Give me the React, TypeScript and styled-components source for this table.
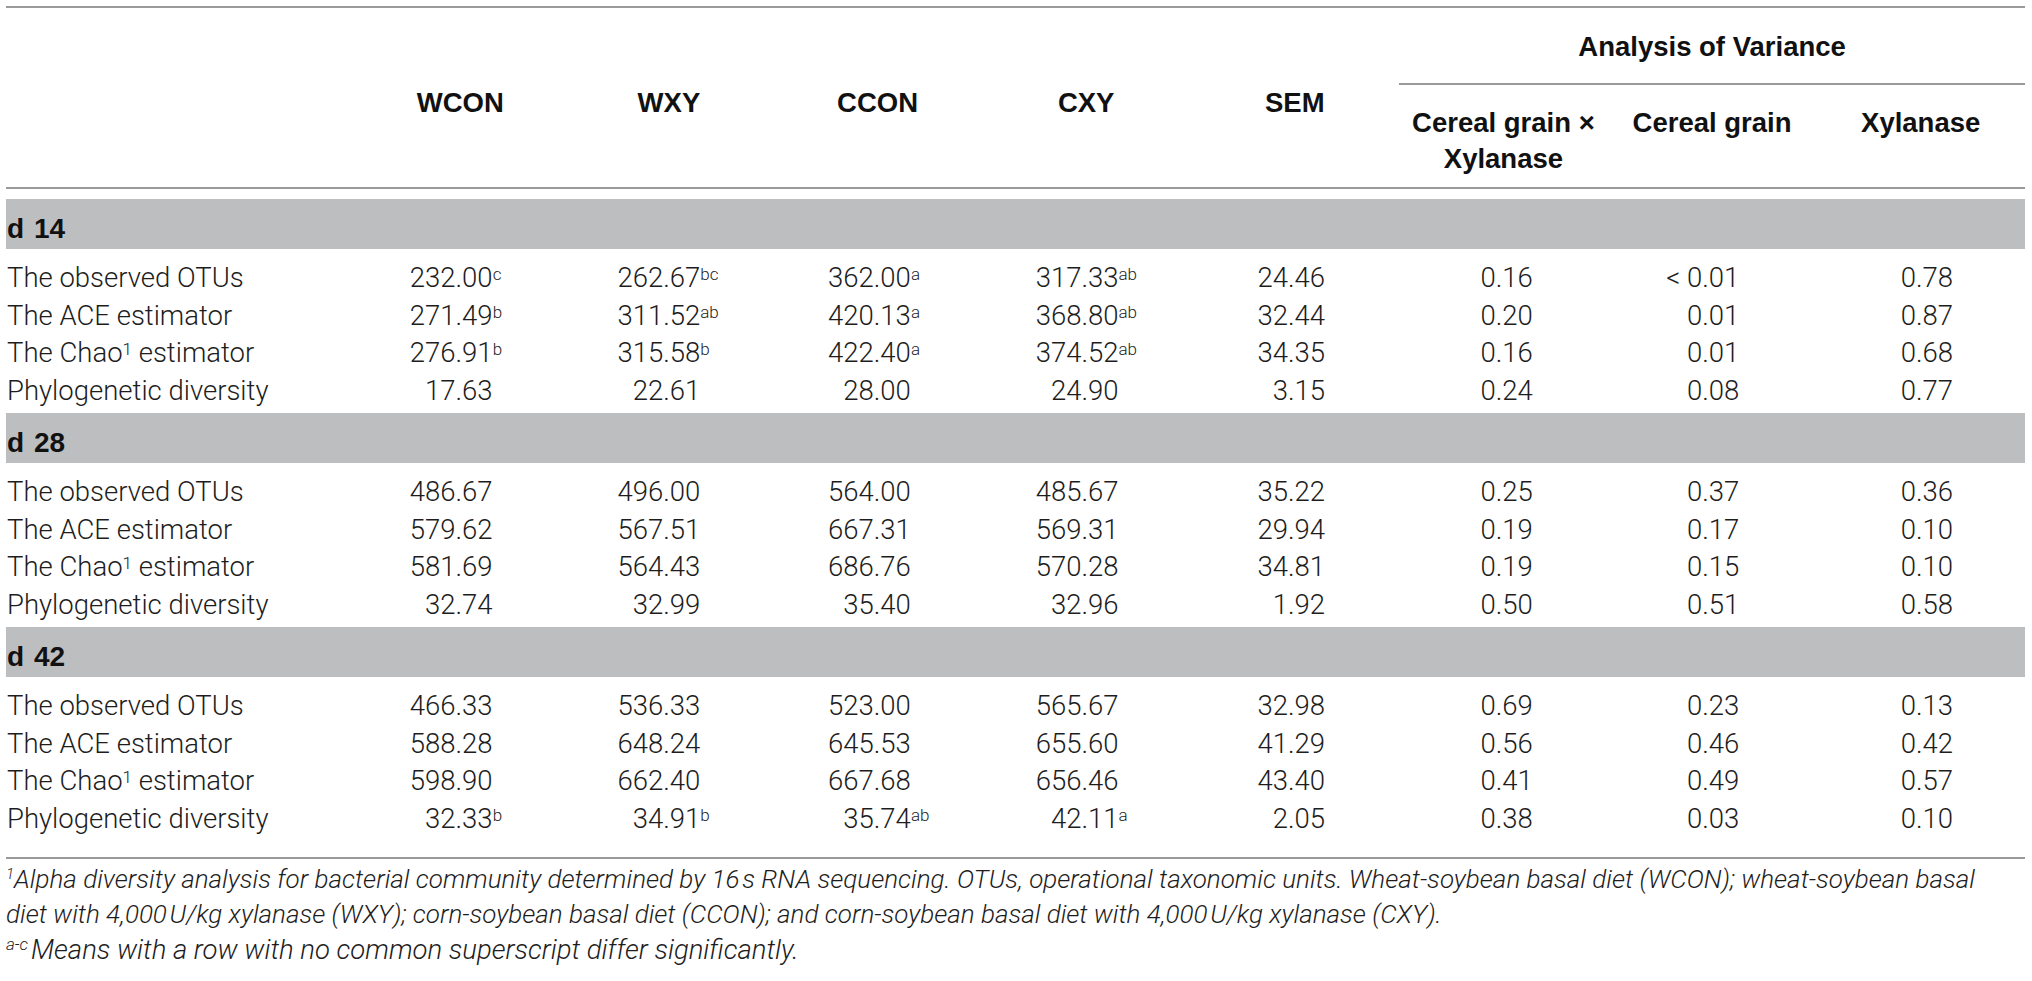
import React from "react";
import styled, { createGlobalStyle } from "styled-components";

const GlobalStyle = createGlobalStyle`
  html, body {
    margin: 0;
    padding: 0;
    background: #ffffff;
    overflow: hidden;
  }
  body {
    font-family: Roboto, "Liberation Sans", Arial, sans-serif;
    color: #1d1d1d;
  }
`;

const COLS = "350px repeat(8, 1fr)";
const RULE = "#999a9c";

const Page = styled.div`
  padding: 6px 0 0 6px;
  width: 2019px;
`;

const Table = styled.div`
  border-top: 2px solid ${RULE};
`;

const HeaderGrid = styled.div`
  display: grid;
  grid-template-columns: ${COLS};
  grid-template-rows: 77px auto;
  border-bottom: 2px solid ${RULE};
  font-family: "Liberation Sans", Arial, sans-serif;
  font-weight: 700;
  font-size: 27.5px;
  color: #111111;
`;

const ColHead = styled.div<{ $col: number }>`
  grid-column: ${(p) => p.$col};
  grid-row: 1 / 3;
  padding-top: 77px;
  line-height: 36px;
  text-align: center;
  white-space: nowrap;
`;

const GroupHead = styled.div`
  grid-column: 7 / 10;
  grid-row: 1;
  box-sizing: border-box;
  height: 77px;
  padding-top: 3px;
  line-height: 72px;
  text-align: center;
  border-bottom: 2px solid ${RULE};
`;

const SubHead = styled.div<{ $col: number }>`
  grid-column: ${(p) => p.$col};
  grid-row: 2;
  padding: 20px 0 10px;
  line-height: 36px;
  text-align: center;
  white-space: nowrap;
`;

const Body = styled.div`
  padding: 10px 0 16px;
  border-bottom: 2px solid ${RULE};
`;

const Band = styled.div`
  box-sizing: border-box;
  height: 50px;
  padding: 10px 0 0 1px;
  line-height: 40px;
  background: #bdbec0;
  font-family: "Liberation Sans", Arial, sans-serif;
  font-weight: 700;
  font-size: 28px;
  color: #111111;
  word-spacing: 2px;
`;

const Rows = styled.div`
  padding: 10px 0 4px;
`;

const Row = styled.div`
  display: grid;
  grid-template-columns: ${COLS};
  height: 37.5px;
  line-height: 37.5px;
  font-weight: 300;
  font-size: 27.5px;
`;

const Label = styled.div`
  padding-left: 1px;
  white-space: nowrap;
`;

const Num = styled.div<{ $pr: number }>`
  display: flex;
  justify-content: flex-end;
  padding-right: ${(p) => p.$pr}px;
  white-space: nowrap;
`;

const Sup = styled.span`
  display: inline-block;
  width: 0;
  font-size: 17px;
  line-height: 1;
  vertical-align: 7px;
  white-space: nowrap;
`;

const LabelSup = styled.span`
  font-size: 17px;
  line-height: 1;
  vertical-align: 7px;
`;

const Notes = styled.div`
  padding-top: 3px;
`;

const Note = styled.p<{ $size: number }>`
  margin: 0;
  font-style: italic;
  font-weight: 300;
  font-size: ${(p) => p.$size}px;
  line-height: 35px;
  white-space: nowrap;
`;

const NoteSup = styled.span<{ $size: number }>`
  font-size: ${(p) => p.$size}px;
  line-height: 1;
  vertical-align: 9px;
`;

const PAD = [72, 73, 71, 72, 74, 75, 77, 72];

type Cell = string | [string, string];

type Group = {
  title: string;
  rows: { label: React.ReactNode; cells: Cell[] }[];
};

const chao = (
  <>
    The Chao<LabelSup>1</LabelSup> estimator
  </>
);

const groups: Group[] = [
  {
    title: "d 14",
    rows: [
      {
        label: "The observed OTUs",
        cells: [["232.00", "c"], ["262.67", "bc"], ["362.00", "a"], ["317.33", "ab"], "24.46", "0.16", "< 0.01", "0.78"],
      },
      {
        label: "The ACE estimator",
        cells: [["271.49", "b"], ["311.52", "ab"], ["420.13", "a"], ["368.80", "ab"], "32.44", "0.20", "0.01", "0.87"],
      },
      {
        label: chao,
        cells: [["276.91", "b"], ["315.58", "b"], ["422.40", "a"], ["374.52", "ab"], "34.35", "0.16", "0.01", "0.68"],
      },
      {
        label: "Phylogenetic diversity",
        cells: ["17.63", "22.61", "28.00", "24.90", "3.15", "0.24", "0.08", "0.77"],
      },
    ],
  },
  {
    title: "d 28",
    rows: [
      { label: "The observed OTUs", cells: ["486.67", "496.00", "564.00", "485.67", "35.22", "0.25", "0.37", "0.36"] },
      { label: "The ACE estimator", cells: ["579.62", "567.51", "667.31", "569.31", "29.94", "0.19", "0.17", "0.10"] },
      { label: chao, cells: ["581.69", "564.43", "686.76", "570.28", "34.81", "0.19", "0.15", "0.10"] },
      { label: "Phylogenetic diversity", cells: ["32.74", "32.99", "35.40", "32.96", "1.92", "0.50", "0.51", "0.58"] },
    ],
  },
  {
    title: "d 42",
    rows: [
      { label: "The observed OTUs", cells: ["466.33", "536.33", "523.00", "565.67", "32.98", "0.69", "0.23", "0.13"] },
      { label: "The ACE estimator", cells: ["588.28", "648.24", "645.53", "655.60", "41.29", "0.56", "0.46", "0.42"] },
      { label: chao, cells: ["598.90", "662.40", "667.68", "656.46", "43.40", "0.41", "0.49", "0.57"] },
      {
        label: "Phylogenetic diversity",
        cells: [["32.33", "b"], ["34.91", "b"], ["35.74", "ab"], ["42.11", "a"], "2.05", "0.38", "0.03", "0.10"],
      },
    ],
  },
];

const heads = ["WCON", "WXY", "CCON", "CXY", "SEM"];

export default function App() {
  return (
    <>
      <GlobalStyle />
      <Page>
        <Table>
          <HeaderGrid>
            {heads.map((h, i) => (
              <ColHead key={h} $col={i + 2}>
                {h}
              </ColHead>
            ))}
            <GroupHead>Analysis of Variance</GroupHead>
            <SubHead $col={7}>
              Cereal grain ×
              <br />
              Xylanase
            </SubHead>
            <SubHead $col={8}>Cereal grain</SubHead>
            <SubHead $col={9}>Xylanase</SubHead>
          </HeaderGrid>
          <Body>
            {groups.map((g) => (
              <div key={g.title}>
                <Band>{g.title}</Band>
                <Rows>
                  {g.rows.map((r, ri) => (
                    <Row key={ri}>
                      <Label>{r.label}</Label>
                      {r.cells.map((c, ci) => (
                        <Num key={ci} $pr={PAD[ci]}>
                          {typeof c === "string" ? (
                            <span>{c}</span>
                          ) : (
                            <span>
                              {c[0]}
                              <Sup>{c[1]}</Sup>
                            </span>
                          )}
                        </Num>
                      ))}
                    </Row>
                  ))}
                </Rows>
              </div>
            ))}
          </Body>
          <Notes>
            <Note $size={26}>
              <NoteSup $size={15}>1</NoteSup>Alpha diversity analysis for bacterial community determined by
              16{"\u200a"}s RNA sequencing. OTUs, operational taxonomic units. Wheat-soybean basal diet (WCON);
              wheat-soybean basal
              <br />
              diet with 4,000{"\u200a"}U/kg xylanase (WXY); corn-soybean basal diet (CCON); and corn-soybean basal
              diet with 4,000{"\u200a"}U/kg xylanase (CXY).
            </Note>
            <Note $size={27.5}>
              <NoteSup $size={17}>a-c</NoteSup>
              {"\u200a"}Means with a row with no common superscript differ significantly.
            </Note>
          </Notes>
        </Table>
      </Page>
    </>
  );
}
